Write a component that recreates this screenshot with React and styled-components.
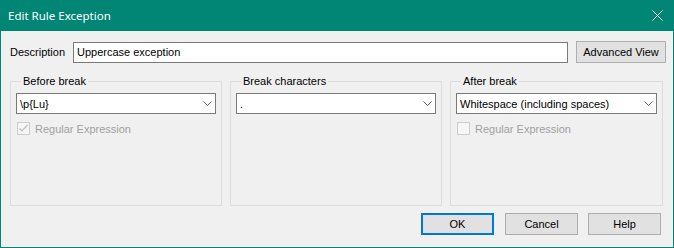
import React from "react";
import styled, { createGlobalStyle } from "styled-components";

const GlobalStyle = createGlobalStyle`
  html, body {
    margin: 0;
    padding: 0;
    background: #ffffff;
  }
  * {
    box-sizing: border-box;
  }
`;

const Window = styled.div`
  width: 674px;
  height: 248px;
  display: flex;
  flex-direction: column;
  background: #018574;
  padding: 0 1px 1px 1px;
  font-family: "Liberation Sans", Arial, sans-serif;
  font-size: 11px;
  color: #000000;
`;

const TitleBar = styled.div`
  height: 31px;
  flex: none;
  display: flex;
  align-items: center;
  justify-content: space-between;
  padding: 0 10px 0 7px;
  color: #ffffff;
  font-family: "Noto Sans", "Open Sans", sans-serif;
  font-size: 11.5px;
`;

const CloseButton = styled.div`
  width: 12px;
  height: 12px;
  display: flex;
  align-items: center;
  justify-content: center;
`;

const Body = styled.div`
  flex: 1;
  background: #f0f0f0;
  display: flex;
  flex-direction: column;
  padding: 10px 7px 12px 9px;
`;

const DescriptionRow = styled.div`
  display: flex;
  align-items: center;
  height: 22px;
`;

const Label = styled.span`
  width: 63px;
  flex: none;
`;

const TextBox = styled.div`
  width: 496px;
  height: 21px;
  border: 1px solid #7a7a7a;
  background: #ffffff;
  display: flex;
  align-items: center;
  padding-left: 3px;
`;

const Button = styled.div`
  width: ${p => p.$width || 73}px;
  height: 22px;
  flex: none;
  display: flex;
  align-items: center;
  justify-content: center;
  background: #e1e1e1;
  border: ${p => (p.$default ? "2px solid #0078d7" : "1px solid #adadad")};
  margin-left: ${p => p.$gap || 0}px;
`;

const Groups = styled.div`
  display: grid;
  grid-template-columns: 212px 212px 213px;
  column-gap: 8px;
  height: 131px;
  margin-top: 12px;
`;

const Group = styled.fieldset`
  margin: 0;
  padding: 0 5px;
  border: 1px solid #dcdcdc;
  min-width: 0;
  height: 131px;
`;

const Legend = styled.legend`
  padding: 0 2px;
  margin-left: 5px;
  line-height: 13px;
`;

const Combo = styled.div`
  height: 21px;
  margin-top: 5px;
  border: 1px solid #7a7a7a;
  background: #ffffff;
  display: flex;
  align-items: center;
  justify-content: space-between;
  padding: 0 3px 0 3px;
`;

const CheckRow = styled.div`
  display: flex;
  align-items: center;
  margin-top: 8px;
  margin-left: 1px;
  color: #a0a0a0;
  height: 13px;
`;

const CheckBox = styled.div`
  width: 13px;
  height: 13px;
  border: 1px solid #cccccc;
  background: #f6f6f6;
  margin-right: 5px;
  display: flex;
  align-items: center;
  justify-content: center;
`;

const Footer = styled.div`
  display: flex;
  justify-content: flex-end;
  margin-top: 7px;
  padding-right: 5px;
`;

const Chevron = () => (
  <svg width="9" height="5" viewBox="0 0 9 5">
    <path d="M0.5 0.5 L4.5 4.5 L8.5 0.5" fill="none" stroke="#606060" strokeWidth="1" />
  </svg>
);

const Check = () => (
  <svg width="11" height="11" viewBox="0 0 11 11">
    <path d="M1.5 5.5 L4 8 L9.5 2" fill="none" stroke="#bcbcbc" strokeWidth="1.2" />
  </svg>
);

const groups = [
  { title: "Before break", value: "\\p{Lu}", check: true, checked: true },
  { title: "Break characters", value: ".", check: false },
  { title: "After break", value: "Whitespace (including spaces)", check: true, checked: false },
];

export default function App() {
  return (
    <>
      <GlobalStyle />
      <Window>
        <TitleBar>
          <span>Edit Rule Exception</span>
          <CloseButton>
            <svg width="11" height="11" viewBox="0 0 11 11">
              <path d="M0.5 0.5 L10.5 10.5 M10.5 0.5 L0.5 10.5" stroke="#ffffff" strokeWidth="1" />
            </svg>
          </CloseButton>
        </TitleBar>
        <Body>
          <DescriptionRow>
            <Label>Description</Label>
            <TextBox>Uppercase exception</TextBox>
            <Button $width={90} $gap={8}>Advanced View</Button>
          </DescriptionRow>
          <Groups>
            {groups.map(g => (
              <Group key={g.title}>
                <Legend>{g.title}</Legend>
                <Combo>
                  <span>{g.value}</span>
                  <Chevron />
                </Combo>
                {g.check && (
                  <CheckRow>
                    <CheckBox>{g.checked && <Check />}</CheckBox>
                    Regular Expression
                  </CheckRow>
                )}
              </Group>
            ))}
          </Groups>
          <Footer>
            <Button $default>OK</Button>
            <Button $gap={11}>Cancel</Button>
            <Button $gap={10}>Help</Button>
          </Footer>
        </Body>
      </Window>
    </>
  );
}
